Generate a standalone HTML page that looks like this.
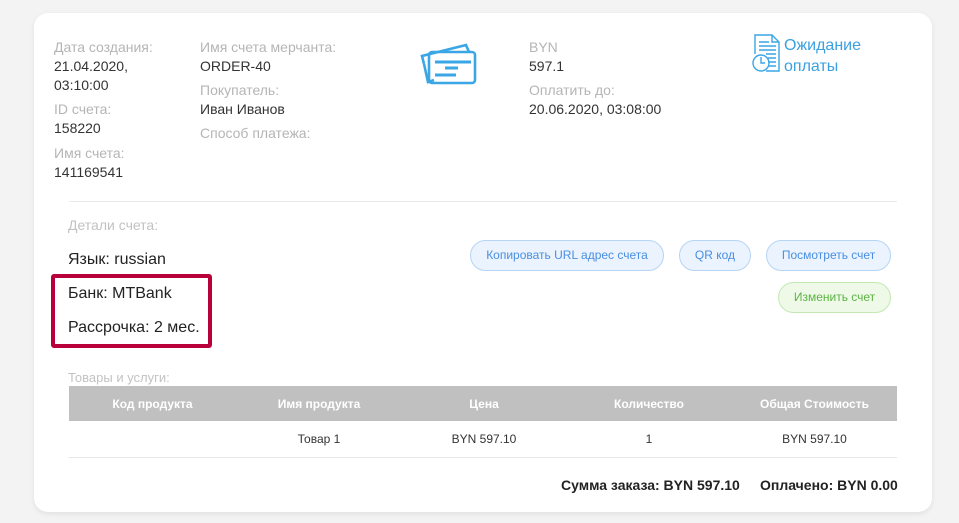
<!DOCTYPE html>
<html><head><meta charset="utf-8"><style>
*{margin:0;padding:0;box-sizing:border-box}
body{width:959px;height:523px;background:#f3f3f3;font-family:"Liberation Sans",Arial,sans-serif;position:relative;overflow:hidden}
.card{position:absolute;left:34px;top:13px;width:898px;height:499px;background:#fff;border-radius:14px;box-shadow:0 2px 6px rgba(0,0,0,.08)}
.t{position:absolute;font-size:14px;line-height:19px;white-space:nowrap}
.l{color:#b5b5b5}.v{color:#333}
.btn{position:absolute;height:31px;border-radius:16px;border:1px solid #b6d4f5;background:#eaf3fe;color:#4a8fe0;font-size:12px;line-height:29px;text-align:center}
.g{border-color:#c4e8b4;background:#eef9e8;color:#5bb443}
table{position:absolute;left:69px;top:386px;width:828px;border-collapse:collapse;font-size:12px}
th{background:#c0c0c0;color:#fff;height:35px;font-weight:bold;text-align:center}
td{height:36px;text-align:center;color:#333;border-bottom:1px solid #e6e6e6}
</style></head><body>
<div class="card"></div>
<div class="t l" style="left:54px;top:38px">Дата создания:</div>
<div class="t v" style="left:54px;top:57px">21.04.2020,</div>
<div class="t v" style="left:54px;top:76px">03:10:00</div>
<div class="t l" style="left:54px;top:100px">ID счета:</div>
<div class="t v" style="left:54px;top:119px">158220</div>
<div class="t l" style="left:54px;top:144px">Имя счета:</div>
<div class="t v" style="left:54px;top:163px">141169541</div>
<div class="t l" style="left:200px;top:38px">Имя счета мерчанта:</div>
<div class="t v" style="left:200px;top:57px">ORDER-40</div>
<div class="t l" style="left:200px;top:81px">Покупатель:</div>
<div class="t v" style="left:200px;top:100px">Иван Иванов</div>
<div class="t l" style="left:200px;top:124px">Способ платежа:</div>
<div class="t l" style="left:529px;top:38px">BYN</div>
<div class="t v" style="left:529px;top:57px">597.1</div>
<div class="t l" style="left:529px;top:81px">Оплатить до:</div>
<div class="t v" style="left:529px;top:100px">20.06.2020, 03:08:00</div>
<svg style="position:absolute;left:420px;top:42px" width="58" height="48" viewBox="0 0 58 48" fill="none" stroke="#3aa6e6" stroke-width="2.6">
<path d="M4 22 L2 14 L46 3 L49 10"/><path d="M4 22 L8 40 L14 38"/>
<rect x="9" y="10" width="46" height="31" rx="3"/>
<path d="M15 20H51M25 26H38M15 33H36" stroke-width="3"/>
</svg>
<svg style="position:absolute;left:751px;top:34px" width="32" height="40" viewBox="0 0 32 40" fill="none" stroke="#3aa6e6" stroke-width="1.4">
<path d="M4 20V1H21L28 8V37H15"/><path d="M21 1V8H28"/>
<path d="M8 8H18M8 12H25M8 16H25M15 20H25M17 24H25M17 28H25M17 32H25"/>
<circle cx="10" cy="29" r="8"/><path d="M10 23V29H14"/>
</svg>
<div class="t" style="left:784px;top:35px;font-size:16px;line-height:21px;color:#3aa0df">Ожидание</div>
<div class="t" style="left:784px;top:56px;font-size:16px;line-height:21px;color:#3aa0df">оплаты</div>
<div style="position:absolute;left:69px;top:201px;width:828px;border-top:1px solid #eaeaea"></div>
<div class="t l" style="left:68px;top:216px;color:#c2c2c2">Детали счета:</div>
<div class="t v" style="left:68px;top:250px;font-size:16px;color:#222">Язык: russian</div>
<div style="position:absolute;left:51px;top:274px;width:161px;height:74px;border:4px solid #b8003a;border-radius:3px"></div>
<div class="t v" style="left:68px;top:284px;font-size:16px;color:#222">Банк: MTBank</div>
<div class="t v" style="left:68px;top:318px;font-size:16px;color:#222">Рассрочка: 2 мес.</div>
<div class="btn" style="left:470px;top:240px;width:194px">Копировать URL адрес счета</div>
<div class="btn" style="left:679px;top:240px;width:72px">QR код</div>
<div class="btn" style="left:766px;top:240px;width:125px">Посмотреть счет</div>
<div class="btn g" style="left:778px;top:282px;width:113px">Изменить счет</div>
<div class="t l" style="left:68px;top:368px;font-size:13px;color:#c2c2c2">Товары и услуги:</div>
<table><tr><th style="width:167px">Код продукта</th><th style="width:166px">Имя продукта</th><th style="width:164px">Цена</th><th style="width:166px">Количество</th><th>Общая Стоимость</th></tr>
<tr><td></td><td>Товар 1</td><td>BYN 597.10</td><td>1</td><td>BYN 597.10</td></tr></table>
<div class="t" style="left:561px;top:476px;font-size:14px;font-weight:bold;color:#222">Сумма заказа: BYN 597.10</div>
<div class="t" style="left:760px;top:476px;font-size:14px;font-weight:bold;color:#222">Оплачено: BYN 0.00</div>
</body></html>
